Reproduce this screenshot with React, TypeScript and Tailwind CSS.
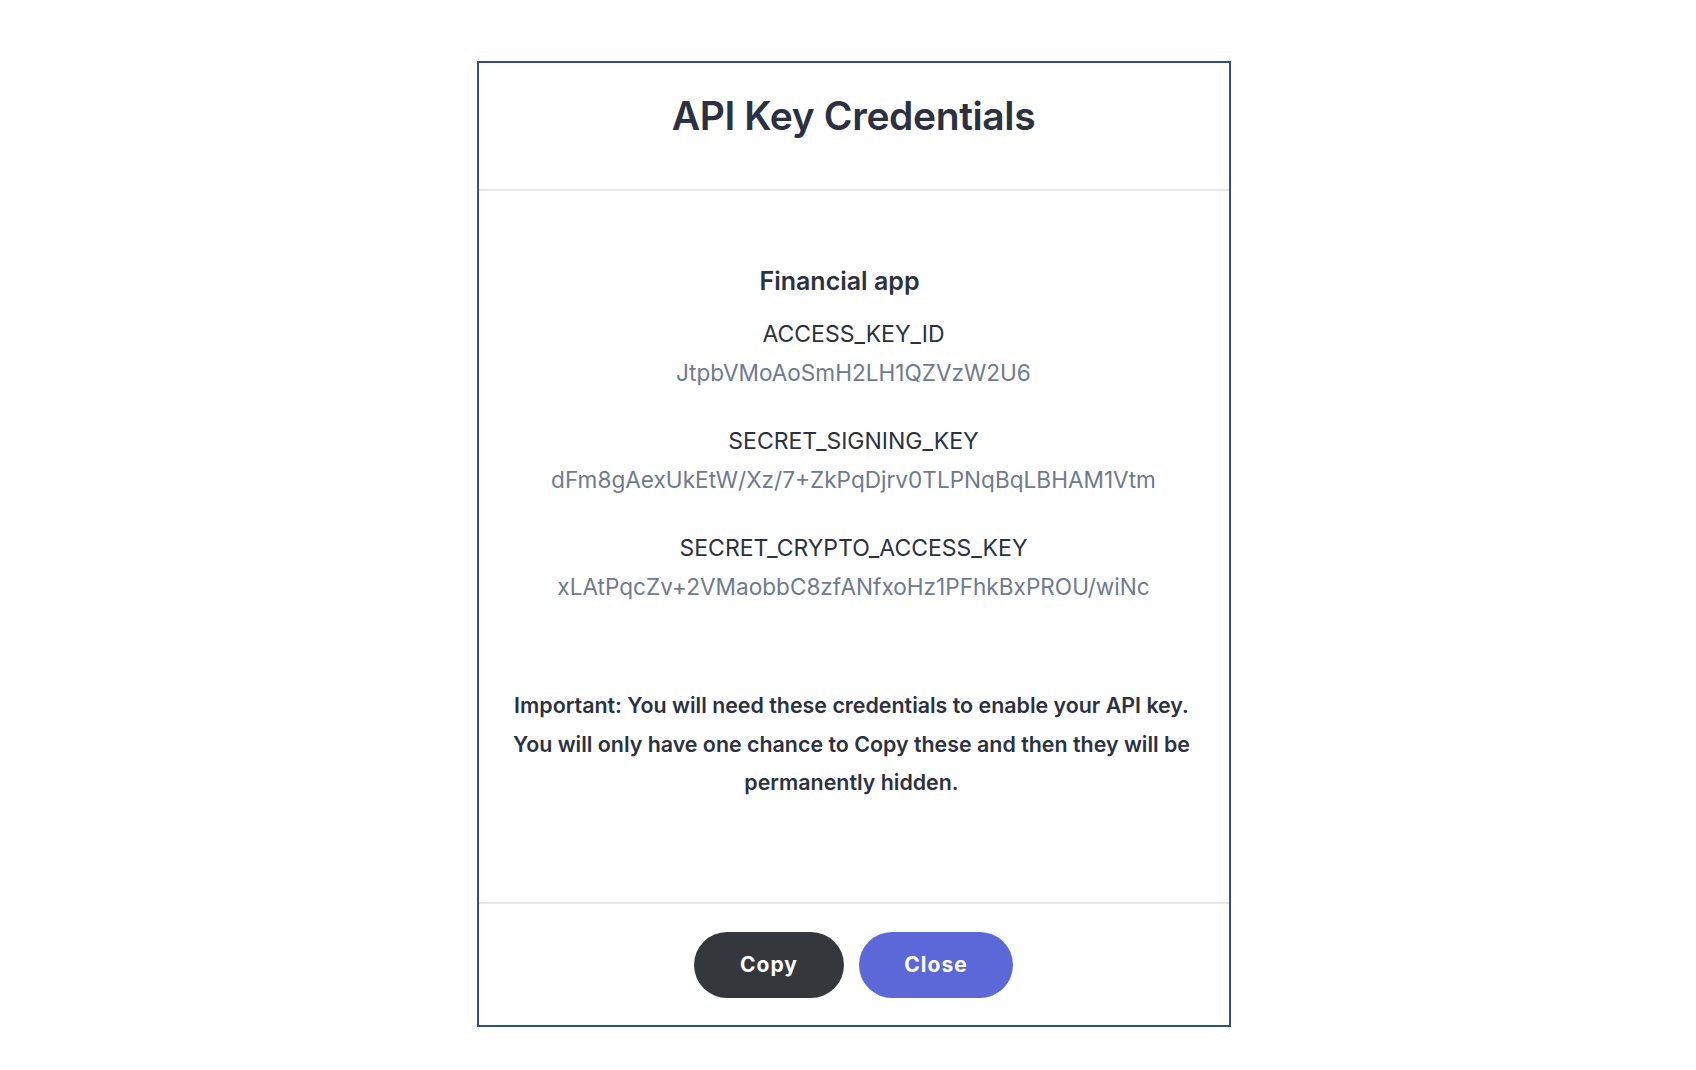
const keys = [
  { label: 'ACCESS_KEY_ID', value: 'JtpbVMoAoSmH2LH1QZVzW2U6' },
  { label: 'SECRET_SIGNING_KEY', value: 'dFm8gAexUkEtW/Xz/7+ZkPqDjrv0TLPNqBqLBHAM1Vtm' },
  { label: 'SECRET_CRYPTO_ACCESS_KEY', value: 'xLAtPqcZv+2VMaobbC8zfANfxoHz1PFhkBxPROU/wiNc' },
];

export default function App() {
  return (
    <div className="min-h-screen bg-white pt-[61px] pb-[46px] pl-[11px] font-['Inter',sans-serif] text-[#2b3140]">
      <div className="mx-auto w-[754px] border-2 border-[#2f4d89] bg-white">
        <div className="flex h-[128px] items-center justify-center border-b-2 border-[#e5e8eb] pb-[20px]">
          <h1 className="text-[39px] font-semibold tracking-[-0.01em]">API Key Credentials</h1>
        </div>

        <div className="flex h-[711px] flex-col items-center pt-[74px]">
          <h2 className="pr-[28px] text-[25px] leading-[32px] font-semibold">Financial app</h2>

          <div className="mt-[22px] flex flex-col items-center gap-[38px]">
            {keys.map((k) => (
              <div key={k.label} className="flex flex-col items-center gap-[9px]">
                <span className="text-[23px] leading-[30px]">{k.label}</span>
                <span className="text-[22.6px] leading-[30px] text-[#6e7a8e]">{k.value}</span>
              </div>
            ))}
          </div>

          <p className="mt-[84px] w-[686px] pr-[4px] text-center text-[21.4px] leading-[38.5px] font-semibold">
            Important: You will need these credentials to enable your API key. You will only have one
            chance to Copy these and then they will be permanently hidden.
          </p>
        </div>

        <div className="flex h-[123px] items-center justify-center gap-[15px] border-t-2 border-[#e5e8eb]">
          <button className="h-[66px] w-[150px] rounded-full bg-[#34383d] text-[21px] font-bold tracking-[0.05em] text-white">
            Copy
          </button>
          <button className="h-[66px] w-[154px] rounded-full bg-[#5c68d8] text-[21px] font-bold tracking-[0.05em] text-white">
            Close
          </button>
        </div>
      </div>
    </div>
  );
}
